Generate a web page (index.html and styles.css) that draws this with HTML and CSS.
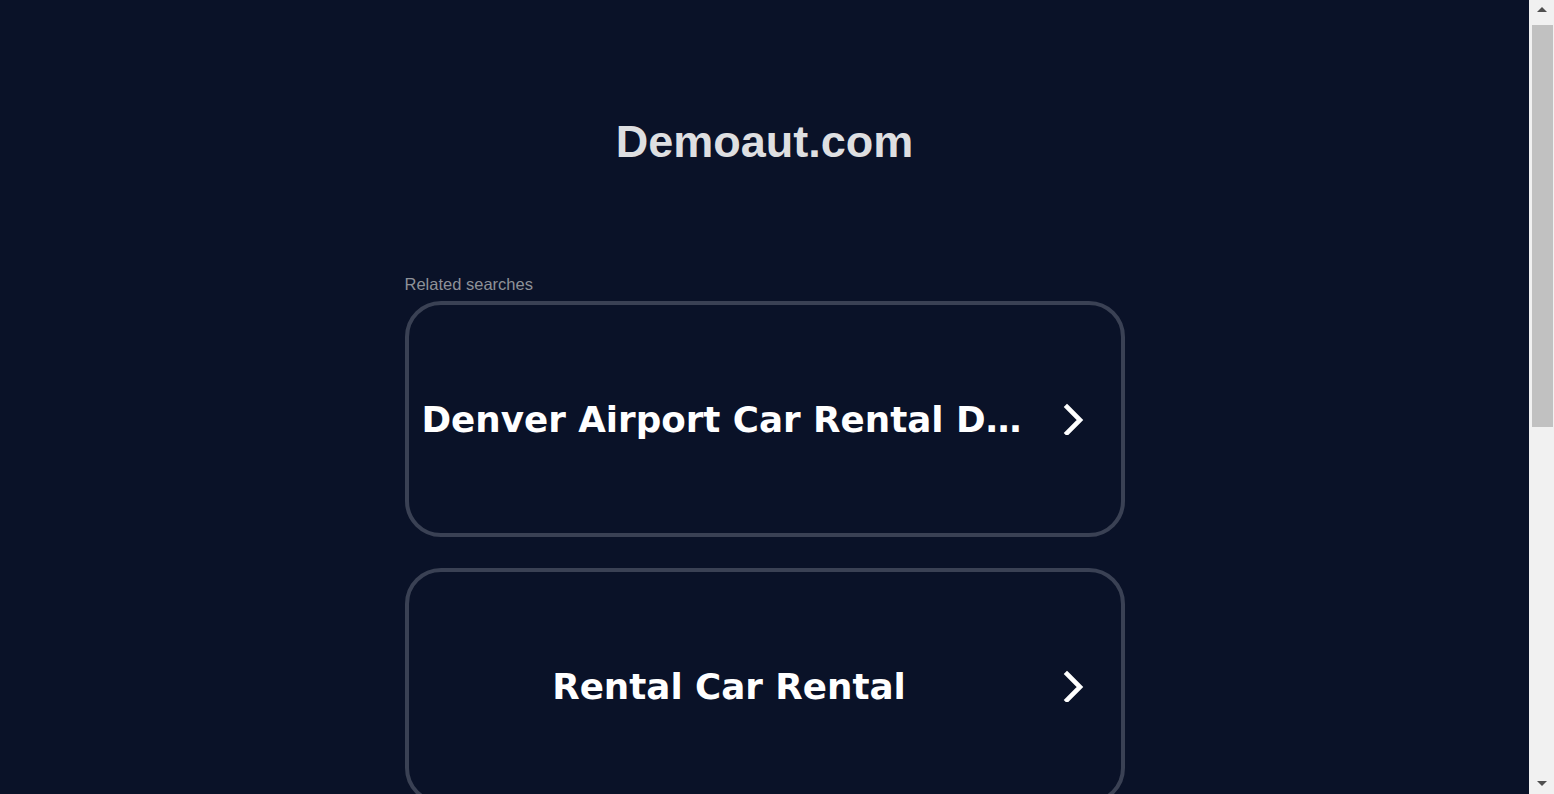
FILE: index.html
```html
<!DOCTYPE html>
<html lang="en">
<head>
<meta charset="utf-8">
<title>Demoaut.com</title>
<link rel="stylesheet" href="styles.css">
</head>
<body>
<div class="page">
  <header class="header">
    <h1 class="domain">Demoaut.com</h1>
  </header>
  <main class="related">
    <div class="related-label">Related searches</div>
    <ul class="cards">
      <li><a class="card" href="#"><span class="card-text">Denver Airport Car Rental Deals</span><svg class="chev" viewBox="0 0 32 32" width="32" height="32"><polyline points="10,4 23,17 10,30" fill="none" stroke="#ffffff" stroke-width="4.6" stroke-linecap="square" stroke-linejoin="miter"/></svg></a></li>
      <li><a class="card" href="#"><span class="card-text">Rental Car Rental</span><svg class="chev" viewBox="0 0 32 32" width="32" height="32"><polyline points="10,4 23,17 10,30" fill="none" stroke="#ffffff" stroke-width="4.6" stroke-linecap="square" stroke-linejoin="miter"/></svg></a></li>
      <li><a class="card" href="#"><span class="card-text">Cheap Car Rentals</span><svg class="chev" viewBox="0 0 32 32" width="32" height="32"><polyline points="10,4 23,17 10,30" fill="none" stroke="#ffffff" stroke-width="4.6" stroke-linecap="square" stroke-linejoin="miter"/></svg></a></li>
      <li><a class="card" href="#"><span class="card-text">Car Rental Deals</span><svg class="chev" viewBox="0 0 32 32" width="32" height="32"><polyline points="10,4 23,17 10,30" fill="none" stroke="#ffffff" stroke-width="4.6" stroke-linecap="square" stroke-linejoin="miter"/></svg></a></li>
    </ul>
  </main>
</div>
<div class="scrollbar" aria-hidden="true">
  <span class="sb-arrow sb-up"></span>
  <span class="sb-thumb"></span>
  <span class="sb-arrow sb-down"></span>
</div>
</body>
</html>
```

FILE: styles.css
```css
html, body {
  margin: 0;
  padding: 0;
  background: #0a1228;
}
body {
  font-family: "Liberation Sans", Arial, sans-serif;
  padding-right: 25px;
}
.page {
  display: flex;
  flex-direction: column;
  align-items: center;
  padding-bottom: 160px;
}
.header {
  padding-top: 116px;
  height: 162px;
  box-sizing: border-box;
}
.domain {
  margin: 0;
  font-size: 45px;
  font-weight: bold;
  line-height: 52px;
  color: #dedfe1;
}
.related {
  width: 720px;
  margin-top: 113px;
}
.related-label {
  font-size: 16.5px;
  line-height: 18px;
  color: #8e9198;
  margin-bottom: 8px;
}
.cards {
  list-style: none;
  margin: 0;
  padding: 0;
  display: flex;
  flex-direction: column;
  gap: 31px;
}
.card {
  display: flex;
  align-items: center;
  height: 236px;
  box-sizing: border-box;
  border: 4px solid #3a4154;
  border-radius: 36px;
  padding: 0 32px 0 13px;
  text-decoration: none;
  color: #ffffff;
}
.card-text {
  flex: 1;
  min-width: 0;
  text-align: center;
  white-space: nowrap;
  overflow: hidden;
  text-overflow: ellipsis;
  font-family: "DejaVu Sans", Verdana, sans-serif;
  font-weight: bold;
  font-size: 35.7px;
  margin-right: 20px;
}
.chev {
  flex: none;
  display: block;
}
.scrollbar {
  position: fixed;
  top: 0;
  right: 0;
  bottom: 0;
  width: 25px;
  background: #f1f1f1;
  display: flex;
  flex-direction: column;
  align-items: center;
}
.sb-arrow {
  display: block;
  width: 0;
  height: 0;
  border-left: 5px solid transparent;
  border-right: 5px solid transparent;
}
.sb-up {
  margin-top: 7px;
  border-bottom: 5px solid #505050;
}
.sb-thumb {
  display: block;
  width: 21px;
  height: 402px;
  margin-top: 13px;
  background: #c1c1c1;
  margin-left: 2px;
}
.sb-down {
  margin-top: auto;
  margin-bottom: 8px;
  border-top: 5px solid #505050;
}
```
